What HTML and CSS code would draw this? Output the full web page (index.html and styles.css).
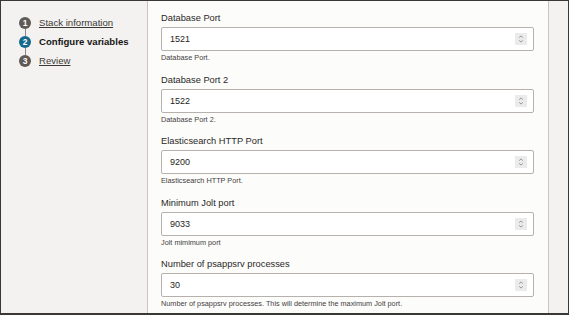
FILE: index.html
```html
<!DOCTYPE html>
<html lang="en">
<head>
<meta charset="utf-8">
<title>Configure variables</title>
<link rel="stylesheet" href="styles.css">
</head>
<body>
<div class="app">
  <aside class="sidebar">
    <ol class="steps">
      <li class="num">1</li><li class="step-text"><a href="#">Stack information</a></li>
      <li class="conn"></li><li class="spacer"></li>
      <li class="num current">2</li><li class="step-text current-text">Configure variables</li>
      <li class="conn"></li><li class="spacer"></li>
      <li class="num">3</li><li class="step-text"><a href="#">Review</a></li>
    </ol>
  </aside>
  <main class="panel">
    <div class="field">
      <label class="label">Database Port</label>
      <div class="input"><span class="value">1521</span><span class="spin"><svg viewBox="0 0 12 12" width="12" height="12"><path d="M4.2 4.6 L6 2.9 L7.8 4.6 M4.2 7.4 L6 9.1 L7.8 7.4" fill="none" stroke="#8d8a87" stroke-width="0.9"/></svg></span></div>
      <div class="help">Database Port.</div>
    </div>
    <div class="field">
      <label class="label">Database Port 2</label>
      <div class="input"><span class="value">1522</span><span class="spin"><svg viewBox="0 0 12 12" width="12" height="12"><path d="M4.2 4.6 L6 2.9 L7.8 4.6 M4.2 7.4 L6 9.1 L7.8 7.4" fill="none" stroke="#8d8a87" stroke-width="0.9"/></svg></span></div>
      <div class="help">Database Port 2.</div>
    </div>
    <div class="field">
      <label class="label">Elasticsearch HTTP Port</label>
      <div class="input"><span class="value">9200</span><span class="spin"><svg viewBox="0 0 12 12" width="12" height="12"><path d="M4.2 4.6 L6 2.9 L7.8 4.6 M4.2 7.4 L6 9.1 L7.8 7.4" fill="none" stroke="#8d8a87" stroke-width="0.9"/></svg></span></div>
      <div class="help">Elasticsearch HTTP Port.</div>
    </div>
    <div class="field">
      <label class="label">Minimum Jolt port</label>
      <div class="input"><span class="value">9033</span><span class="spin"><svg viewBox="0 0 12 12" width="12" height="12"><path d="M4.2 4.6 L6 2.9 L7.8 4.6 M4.2 7.4 L6 9.1 L7.8 7.4" fill="none" stroke="#8d8a87" stroke-width="0.9"/></svg></span></div>
      <div class="help">Jolt mimimum port</div>
    </div>
    <div class="field">
      <label class="label">Number of psappsrv processes</label>
      <div class="input"><span class="value">30</span><span class="spin"><svg viewBox="0 0 12 12" width="12" height="12"><path d="M4.2 4.6 L6 2.9 L7.8 4.6 M4.2 7.4 L6 9.1 L7.8 7.4" fill="none" stroke="#8d8a87" stroke-width="0.9"/></svg></span></div>
      <div class="help">Number of psappsrv processes. This will determine the maximum Jolt port.</div>
    </div>
  </main>
  <div class="gutter"></div>
</div>
</body>
</html>
```
FILE: styles.css
```css
* { box-sizing: border-box; }
html, body { margin: 0; padding: 0; }
body {
  font-family: "Liberation Sans", Arial, sans-serif;
  color: #1f1d1b;
  background: #f3f2f1;
}
.app {
  width: 569px;
  height: 315px;
  border: 1px solid #3a3836;
  border-bottom-width: 2px;
  display: flex;
  overflow: hidden;
  background: #f3f2f1;
}
.sidebar {
  width: 146px;
  flex: none;
  padding: 16px 0 0 18px;
}
.steps {
  list-style: none;
  margin: 0;
  padding: 0;
  display: grid;
  grid-template-columns: 12px auto;
  grid-template-rows: 12px 7px 12px 7px 12px;
  column-gap: 8px;
  align-items: center;
}
.num {
  width: 12px;
  height: 12px;
  border-radius: 50%;
  background: #5f5a55;
  color: #fff;
  font-size: 8.5px;
  font-weight: bold;
  line-height: 12px;
  text-align: center;
}
.num.current { background: #15698c; }
.conn {
  width: 1px;
  height: 7px;
  margin-left: 6px;
  background: #8c8782;
}
.step-text {
  font-size: 9.6px;
  line-height: 12px;
  white-space: nowrap;
}
.step-text a {
  color: #3c3935;
  text-decoration: underline;
}
.current-text {
  font-weight: bold;
  color: #161513;
}
.panel {
  width: 402px;
  flex: none;
  background: #fcfcfb;
  border-left: 1px solid #c9c5c0;
  border-right: 1px solid #c9c5c0;
  padding: 11px 13px 0 13px;
  display: flex;
  flex-direction: column;
  gap: 11.5px;
}
.field {
  display: flex;
  flex-direction: column;
}
.label {
  font-size: 9.3px;
  line-height: 13px;
  color: #2a2826;
  margin-bottom: 2px;
}
.input {
  height: 24px;
  width: 373px;
  border: 1px solid #b6b1ac;
  border-radius: 2px;
  background: #fff;
  display: flex;
  align-items: center;
  justify-content: space-between;
  padding: 0 6px 0 8px;
}
.value {
  font-size: 9px;
  color: #1f1d1b;
}
.spin {
  width: 12px;
  height: 12px;
  background: #ebebeb;
  display: flex;
}
.help {
  margin-top: 2px;
  font-size: 7.3px;
  line-height: 9px;
  color: #44413e;
  white-space: nowrap;
}
.gutter {
  flex: 1;
  background: #f3f2f1;
}
```
